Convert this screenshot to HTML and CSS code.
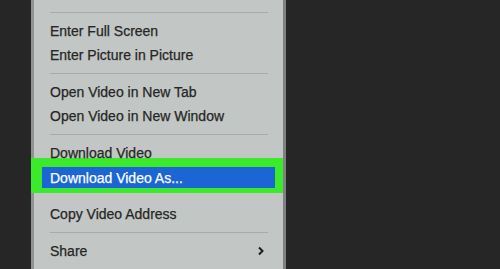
FILE: index.html
```html
<!DOCTYPE html>
<html lang="en">
<head>
    <meta charset="UTF-8">
    <title>Video context menu</title>
    <link rel="stylesheet" href="styles.css">
</head>
<body>
    <div class="menu">
        <div class="sep"></div>
        <div class="item">Enter Full Screen</div>
        <div class="item">Enter Picture in Picture</div>
        <div class="sep"></div>
        <div class="item">Open Video in New Tab</div>
        <div class="item">Open Video in New Window</div>
        <div class="sep"></div>
        <div class="item">Download Video</div>
        <div class="item active">Download Video As...</div>
        <div class="sep hidden"></div>
        <div class="item">Copy Video Address</div>
        <div class="sep"></div>
        <div class="item">
            <span>Share</span>
            <svg class="chevron" width="8" height="10" viewBox="0 0 8 10">
                <path d="M2 1.5 L5.5 5 L2 8.5" fill="none" stroke="#1e1e1e" stroke-width="2"/>
            </svg>
        </div>
        <div class="sep"></div>
    </div>
</body>
</html>
```

FILE: styles.css
```css
body {
    margin: 0;
    height: 269px;
    overflow: hidden;
    background-color: #262626;
    font-family: "Liberation Sans", Arial, sans-serif;
}
.menu {
    position: relative;
    z-index: 0;
    margin-left: 31px;
    width: 249px;
    height: 269px;
    padding-top: 6px;
    background-color: #c2c6c4;
    border-left: 3px solid #8f9391;
    border-right: 3px solid #7e8180;
    display: flex;
    flex-direction: column;
}
.sep {
    height: 13px;
    flex-shrink: 0;
    display: flex;
    align-items: center;
    margin: 0 15px 0 16px;
}
.sep::before {
    content: "";
    flex: 1;
    height: 1px;
    background-color: #a7abaa;
}
.sep.hidden::before {
    background-color: transparent;
}
.item {
    height: 24px;
    flex-shrink: 0;
    margin: 0 8px;
    padding: 0 8px;
    display: flex;
    align-items: center;
    justify-content: space-between;
    font-size: 14px;
    color: #262626;
    -webkit-text-stroke: 0.25px #262626;
}
.item.active {
    position: relative;
    height: 21px;
    margin-top: 2px;
    margin-bottom: 1px;
    background-color: #1b66d4;
    color: #ffffff;
    -webkit-text-stroke: 0.25px #ffffff;
}
.item.active::before {
    content: "";
    position: absolute;
    left: -11px;
    right: -8px;
    top: -9px;
    bottom: -5px;
    background-color: #3cea2c;
    z-index: -1;
}
.chevron {
    margin-right: 2px;
}
```
